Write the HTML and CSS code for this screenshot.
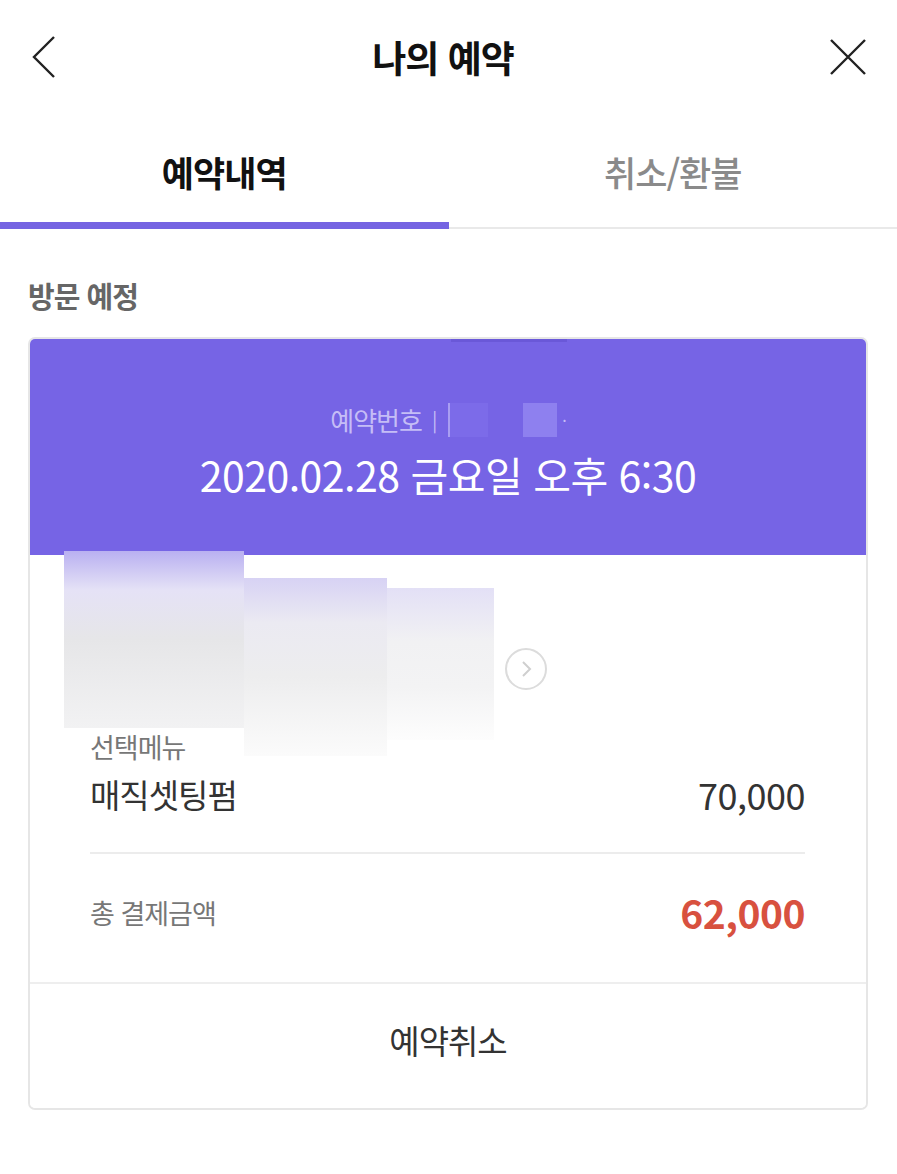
FILE: index.html
```html
<!DOCTYPE html>
<html lang="ko">
<head>
<meta charset="utf-8">
<title>나의 예약</title>
<link rel="stylesheet" href="styles.css">
</head>
<body>
<div class="page">
  <header class="topbar">
    <svg class="icon-back" width="26" height="44" viewBox="0 0 26 44"><path d="M23 2 L3 22 L23 42" fill="none" stroke="#222" stroke-width="2.4"/></svg>
    <h1 class="title">나의 예약</h1>
    <svg class="icon-close" width="38" height="38" viewBox="0 0 38 38"><path d="M2 2 L36 36 M36 2 L2 36" fill="none" stroke="#222" stroke-width="2.4"/></svg>
  </header>
  <nav class="tabs">
    <div class="tab active">예약내역</div>
    <div class="tab">취소/환불</div>
  </nav>
  <section class="section">
    <h2 class="section-title">방문 예정</h2>
    <div class="card">
      <div class="card-head">
        <div class="head-strip"></div>
        <div class="resv-no">예약번호 <span class="bar">|</span><span class="mask m1"></span><span class="mask m2"></span><span class="dot">·</span></div>
        <div class="resv-date">2020.02.28 금요일 오후 6:30</div>
      </div>
      <div class="card-body">
        <div class="shop">
          <div class="blur b1"></div>
          <div class="blur b2"></div>
          <div class="blur b3"></div>
          <svg class="shop-arrow" width="44" height="44" viewBox="0 0 44 44"><circle cx="22" cy="22" r="20" fill="none" stroke="#dcdcdc" stroke-width="2"/><path d="M19 15 L26 22 L19 29" fill="none" stroke="#cfcfcf" stroke-width="2"/></svg>
        </div>
        <div class="menu-label">선택메뉴</div>
        <div class="row menu-row">
          <span class="menu-name">매직셋팅펌</span>
          <span class="menu-price">70,000</span>
        </div>
        <div class="divider"></div>
        <div class="row total-row">
          <span class="total-label">총 결제금액</span>
          <span class="total-price">62,000</span>
        </div>
      </div>
      <button class="cancel">예약취소</button>
    </div>
  </section>
</div>
</body>
</html>
```
FILE: styles.css
```css
* { box-sizing: border-box; }
html, body { margin: 0; padding: 0; background: #fff; }
body {
  font-family: "Noto Sans CJK KR", "Noto Sans", sans-serif;
  color: #222;
}
.page { width: 897px; }

.topbar {
  height: 114px;
  display: flex;
  align-items: center;
  justify-content: space-between;
  padding: 0 30px 0 31px;
}
.title {
  margin: 0;
  font-size: 37px;
  font-weight: 700;
  letter-spacing: -1px;
  color: #111;
}

.tabs {
  display: flex;
  height: 115px;
  box-shadow: inset 0 -2px 0 #e9e9e9;
}
.tab {
  flex: 1;
  display: flex;
  align-items: center;
  justify-content: center;
  font-size: 35px;
  font-weight: 500;
  color: #8a8a8a;
  letter-spacing: -1px;
}
.tab.active {
  color: #111;
  font-weight: 700;
  border-bottom: 7px solid #7564e2;
  padding-top: 7px;
}

.section { padding: 0 29px 0 28px; }
.section-title {
  margin: 48px 0 24px;
  font-size: 29px;
  font-weight: 700;
  color: #666;
  letter-spacing: -1px;
  line-height: 36px;
}

.card {
  border: 2px solid #e6e6e6;
  border-radius: 7px;
  overflow: hidden;
}
.card-head {
  position: relative;
  background: #7664e5;
  height: 216px;
  display: flex;
  flex-direction: column;
  align-items: center;
  padding-top: 63px;
}
.head-strip {
  position: absolute;
  top: 0;
  left: 421px;
  width: 116px;
  height: 3px;
  background: #6a58d8;
}
.resv-no {
  font-size: 26px;
  color: #c5bdf6;
  line-height: 36px;
  letter-spacing: -1px;
  display: flex;
  align-items: center;
  margin-left: 0;
}
.resv-no .bar { margin: 0 12px 0 10px; font-size: 20px; }
.mask { display: inline-block; height: 34px; }
.mask.m1 { width: 40px; background: #7c6be9; border-left: 2px solid #a99ef2; }
.mask.m2 { width: 34px; background: #8e80ef; margin-left: 35px; }
.resv-no .dot { margin-left: 5px; font-size: 16px; }
.resv-date {
  margin-top: 10px;
  font-size: 41px;
  color: #fff;
  line-height: 52px;
  letter-spacing: -0.5px;
}

.card-body {
  padding: 0 61px 0 60px;
}
.shop {
  position: relative;
  height: 175px;
}
.blur { position: absolute; }
.blur.b1 {
  left: -26px; top: -4px; width: 180px; height: 177px;
  background: linear-gradient(180deg, #b9b0f1 0%, #e5e2f6 22%, #e6e6e8 50%, #f2f2f3 100%);
}
.blur.b2 {
  left: 154px; top: 23px; width: 143px; height: 178px;
  background: linear-gradient(180deg, #d7d2f4 0%, #ebeaf2 25%, #ededee 55%, #fbfbfb 100%);
}
.blur.b3 {
  left: 297px; top: 33px; width: 107px; height: 152px;
  background: linear-gradient(180deg, #e3e0f6 0%, #f1f1f3 35%, #f3f3f4 65%, #fdfdfd 100%);
}
.shop-arrow {
  position: absolute;
  left: 414px;
  top: 92px;
}
.menu-label {
  position: relative;
  font-size: 27px;
  color: #777;
  line-height: 34px;
  letter-spacing: -1px;
}
.row {
  display: flex;
  justify-content: space-between;
  align-items: center;
}
.menu-row { margin-top: 4px; height: 52px; }
.menu-name { font-size: 33px; color: #333; letter-spacing: -1px; }
.menu-price { font-size: 36px; color: #333; letter-spacing: -0.5px; }
.divider { height: 2px; background: #ececec; margin-top: 32px; }
.total-row { height: 128px; padding-bottom: 12px; }
.total-label { font-size: 27px; color: #777; letter-spacing: -1px; }
.total-price { font-size: 39px; font-weight: 700; color: #d8513f; letter-spacing: -0.5px; }

.cancel {
  display: block;
  width: 100%;
  height: 126px;
  border: 0;
  border-top: 2px solid #eeeeee;
  background: #fff;
  font-family: inherit;
  font-size: 33px;
  color: #333;
  letter-spacing: -1px;
  padding-bottom: 14px;
}
```
